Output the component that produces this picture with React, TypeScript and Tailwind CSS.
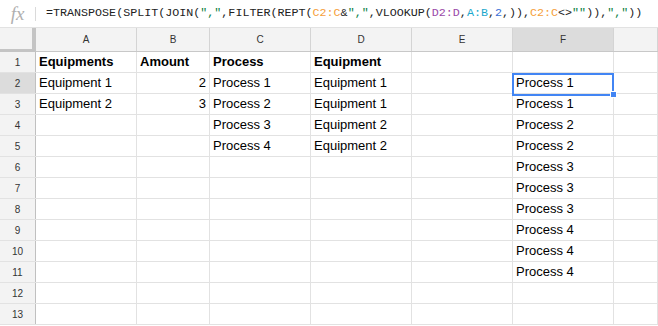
const cols = [
  { key: "A", w: "w-[101px]" },
  { key: "B", w: "w-[73px]" },
  { key: "C", w: "w-[101px]" },
  { key: "D", w: "w-[101px]" },
  { key: "E", w: "w-[101px]" },
  { key: "F", w: "w-[101px]" },
  { key: "G", w: "flex-1" },
];

type Cell = { text?: string; bold?: boolean; right?: boolean };

const data: Record<number, Record<string, Cell>> = {
  1: {
    A: { text: "Equipments", bold: true },
    B: { text: "Amount", bold: true },
    C: { text: "Process", bold: true },
    D: { text: "Equipment", bold: true },
  },
  2: {
    A: { text: "Equipment 1" },
    B: { text: "2", right: true },
    C: { text: "Process 1" },
    D: { text: "Equipment 1" },
    F: { text: "Process 1" },
  },
  3: {
    A: { text: "Equipment 2" },
    B: { text: "3", right: true },
    C: { text: "Process 2" },
    D: { text: "Equipment 1" },
    F: { text: "Process 1" },
  },
  4: { C: { text: "Process 3" }, D: { text: "Equipment 2" }, F: { text: "Process 2" } },
  5: { C: { text: "Process 4" }, D: { text: "Equipment 2" }, F: { text: "Process 2" } },
  6: { F: { text: "Process 3" } },
  7: { F: { text: "Process 3" } },
  8: { F: { text: "Process 3" } },
  9: { F: { text: "Process 4" } },
  10: { F: { text: "Process 4" } },
  11: { F: { text: "Process 4" } },
};

function Formula() {
  return (
    <span className="font-['Liberation_Mono',monospace] text-[11.7px] text-[#222] whitespace-nowrap">
      =TRANSPOSE(SPLIT(JOIN(<span className="text-[#0b8043]">","</span>,FILTER(REPT(
      <span className="text-[#f5a03a]">C2:C</span>&amp;<span className="text-[#0b8043]">","</span>,VLOOKUP(
      <span className="text-[#9a4aa8]">D2:D</span>,<span className="text-[#1ba7cc]">A:B</span>,
      <span className="text-[#3b6fd6]">2</span>,)),<span className="text-[#f5a03a]">C2:C</span>&lt;&gt;
      <span className="text-[#0b8043]">""</span>)),<span className="text-[#0b8043]">","</span>))
    </span>
  );
}

export default function App() {
  const rows = Array.from({ length: 13 }, (_, i) => i + 1);
  return (
    <div className="w-[658px] h-[326px] overflow-hidden bg-white font-['Liberation_Sans',Arial,sans-serif]">
      {/* formula bar */}
      <div className="h-[28px] flex items-center border-b border-[#e2e2e2]">
        <div className="w-[35px] flex justify-center">
          <span className="font-['Liberation_Serif',serif] italic text-[19px] text-[#b0b0b0] leading-none">fx</span>
        </div>
        <div className="w-px h-[14px] bg-[#dadada]" />
        <div className="pl-[10px] flex items-center">
          <Formula />
        </div>
      </div>

      {/* grid */}
      <div className="relative">
        {/* column header */}
        <div className="flex h-[24px] bg-[#f3f3f3] border-b border-[#c8c8c8]">
          <div className="w-[36px] shrink-0 border-r-[4px] border-[#c4c4c4] border-b-[3px] -mb-[1px] bg-[#f3f3f3]" />
          {cols.map((c) => (
            <div
              key={c.key}
              className={`${c.w} shrink-0 flex items-center justify-center text-[10px] text-[#333] border-r border-[#d4d4d4] ${
                c.key === "F" ? "bg-[#dcdcdc]" : ""
              }`}
            >
              {c.key !== "G" ? c.key : ""}
            </div>
          ))}
        </div>

        {rows.map((r) => (
          <div key={r} className="flex h-[21px] border-b border-[#e2e2e2]">
            <div
              className={`w-[36px] shrink-0 flex items-center justify-center text-[10px] text-[#333] border-r border-[#c0c0c0] ${
                r === 2 ? "bg-[#dcdcdc]" : "bg-[#f3f3f3]"
              }`}
            >
              {r}
            </div>
            {cols.map((c) => {
              const cell = data[r]?.[c.key];
              return (
                <div
                  key={c.key}
                  className={`${c.w} shrink-0 flex items-center px-[3px] text-[13px] text-black border-r border-[#e2e2e2] whitespace-nowrap overflow-hidden ${
                    cell?.right ? "justify-end" : ""
                  } ${cell?.bold ? "font-bold" : ""}`}
                >
                  {cell?.text}
                </div>
              );
            })}
          </div>
        ))}

        {/* selection on F2 */}
        <div className="absolute left-[512px] top-[45px] w-[102px] h-[23px] border-2 border-[#4285f4] pointer-events-none" />
        <div className="absolute left-[610px] top-[63px] w-[7px] h-[7px] bg-[#4285f4] border border-white" />
      </div>
    </div>
  );
}
